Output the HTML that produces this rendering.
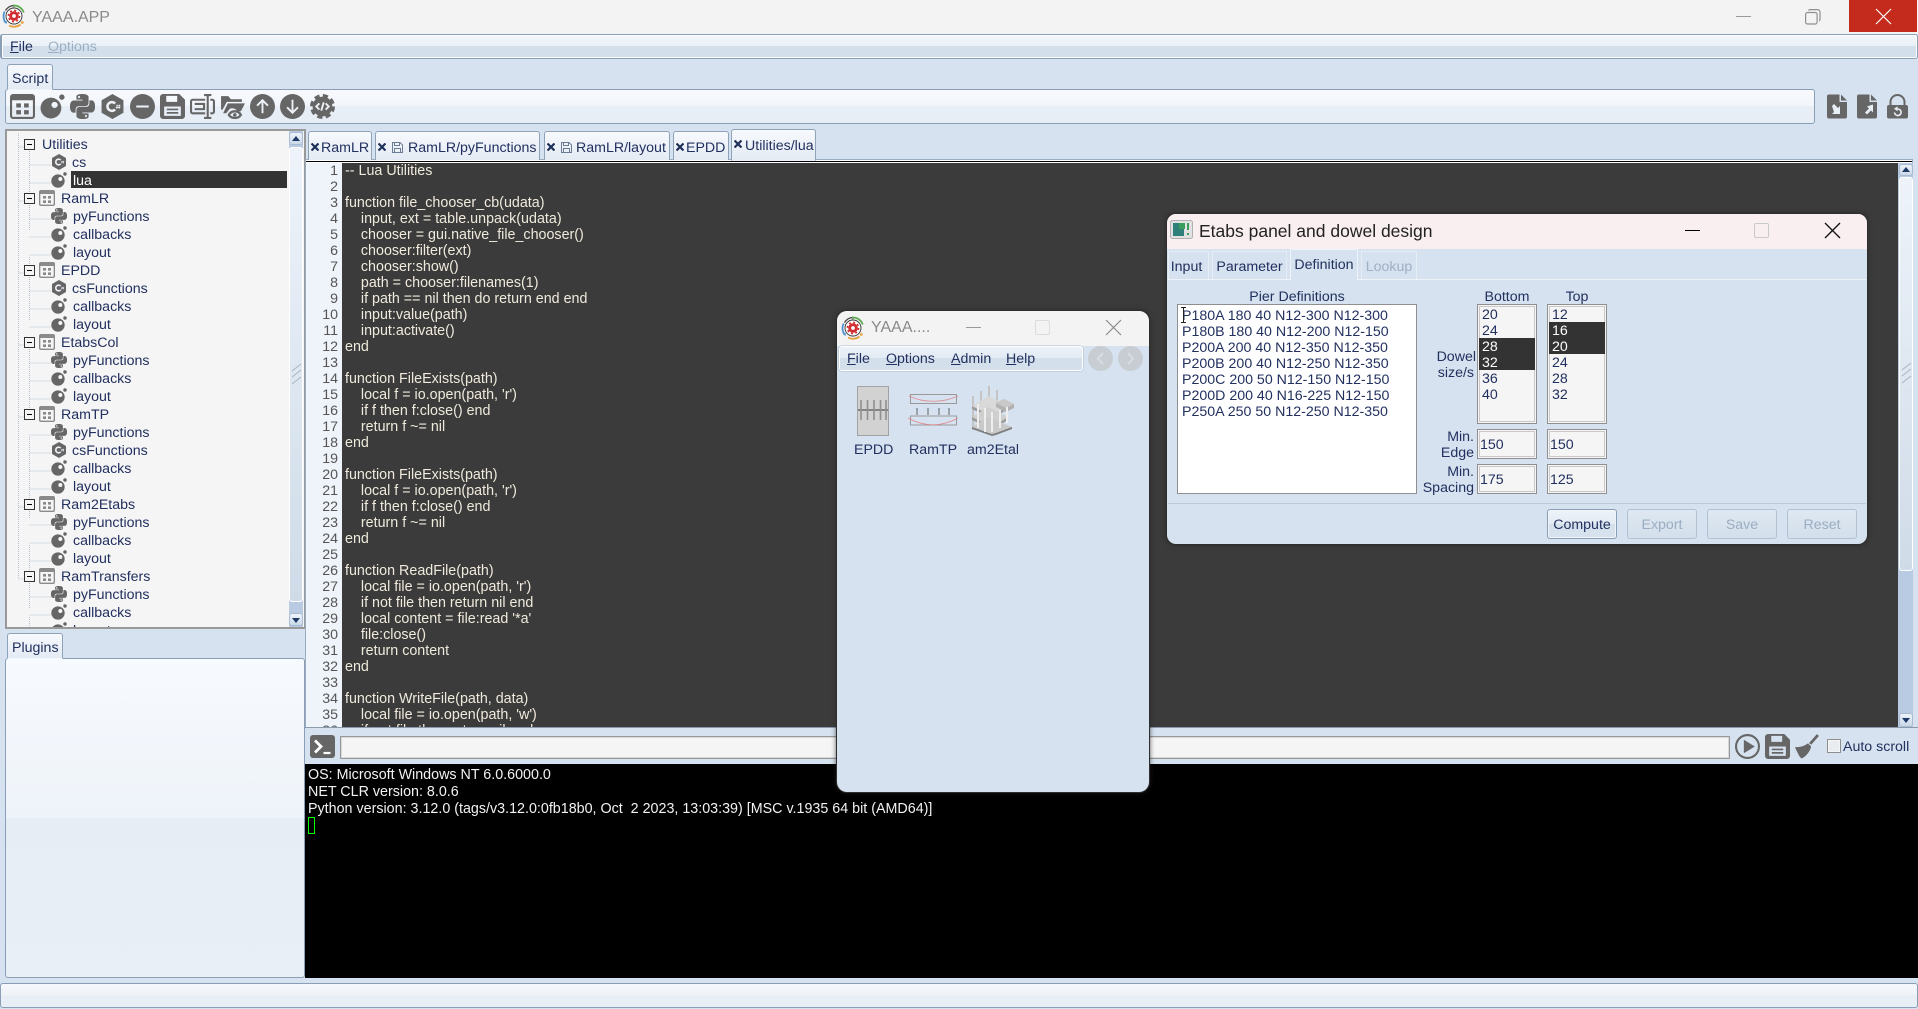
<!DOCTYPE html>
<html><head><meta charset="utf-8"><title>YAAA.APP</title>
<style>
html,body{margin:0;padding:0;width:1918px;height:1009px;overflow:hidden;background:#d6e2ef;font-family:"Liberation Sans",sans-serif;font-size:14.2px;color:#22305f}
div,pre,svg,span{box-sizing:border-box}
.t{position:absolute;white-space:pre;line-height:16px;height:16px;transform:translateY(1px)}
svg{position:absolute;display:block;overflow:visible}
u{text-decoration:underline;text-underline-offset:1px}
.tab{position:absolute;border:1px solid #8ea2b8;border-bottom:none;border-radius:3px 3px 0 0;background:linear-gradient(#f7f9fd,#e4ebf4);line-height:26px;white-space:pre}
.bar{position:absolute;border:1px solid #8a9fb5;border-radius:3px;background:linear-gradient(#f4f7fc 0,#e9f0f7 48%,#d3dfeb 48%,#d3dfeb 100%)}
.r{position:absolute;height:18px;line-height:18px;white-space:pre}
.r svg{top:1px}
.exp{position:absolute;left:17px;width:11px;height:11px;border:1px solid #333;background:#f5f5f5}
.exp:after{content:"";position:absolute;left:2px;top:4px;width:5px;height:1px;background:#000}
.sb{position:absolute;background:linear-gradient(#eef3fa,#cfdbe8)}
.sbb{position:absolute;background:linear-gradient(#eef3fa,#c9d8e8);border:1px solid #a9bbd0;border-radius:3px}
.box{position:absolute;border:2px solid #989898;background:#f5f5f5;box-shadow:inset 0 0 0 1px #d8d8d8}
.list{position:absolute;border:1px solid #8f8f8f;background:#f5f5f5;box-shadow:inset 0 0 0 1px #f5f5f5,inset 0 0 0 2px #c9c9c9}
.btn{position:absolute;top:509px;width:70px;height:30px;border:1px solid #b3c2d2;border-radius:3px;text-align:center;line-height:30px;color:#9badc2;background:linear-gradient(#dfe8f2,#d3dfeb)}
.dtab{position:absolute;border:1px solid #e6edf5;border-bottom:none;line-height:31px;text-align:center;background:#d6e2ef}
.x{left:2px;top:11px;stroke:#1e2f58;stroke-width:2.200;fill:none}
.fl{left:16px;top:10px;fill:none;stroke:#6b7c94;stroke-width:1}
.tt{position:absolute;top:1px}
</style></head>
<body>
<svg width="0" height="0" style="position:absolute">
<defs>
<symbol id="app" viewBox="0 0 24 24"><path fill-rule="evenodd" d="M3 0h18a3 3 0 0 1 3 3v18a3 3 0 0 1-3 3H3a3 3 0 0 1-3-3V3a3 3 0 0 1 3-3zM2 6v15a1 1 0 0 0 1 1h18a1 1 0 0 0 1-1V6z"/><path d="M15.500 2h2v2h-2zM19 2h2v2h-2zM6 9h4.500v4H6zM13.500 9H18v4h-4.500zM6 15.500h4.500v4H6zM13.500 15.500H18v4h-4.500z"/></symbol>
<symbol id="lua" viewBox="0 0 24 24"><path fill-rule="evenodd" d="M10.500 3.500a10 10 0 1 0 0 20 10 10 0 0 0 0-20zM14 7.500a3 3 0 1 1 0 6 3 3 0 0 1 0-6z"/><circle cx="21" cy="3" r="2.600"/></symbol>
<symbol id="py" viewBox="0 0 24 24"><path d="M14.250.18l.9.2.73.26.59.3.45.32.34.34.25.34.16.33.1.3.04.26.02.2-.01.13V8.500l-.05.63-.13.55-.21.46-.26.38-.3.31-.33.25-.35.19-.35.14-.33.1-.3.07-.26.04-.21.02H8.770l-.69.05-.59.14-.5.22-.41.27-.33.32-.27.35-.2.36-.15.37-.1.35-.07.32-.04.27-.02.21v3.060H3.170l-.21-.03-.28-.07-.32-.12-.35-.18-.36-.26-.36-.36-.35-.46-.32-.59-.28-.73-.21-.88-.14-1.050-.05-1.230.06-1.220.16-1.040.24-.87.32-.71.36-.57.4-.44.42-.33.42-.24.4-.16.36-.1.32-.05.24-.01h.16l.06.01h8.160v-.83H6.180l-.01-2.750-.02-.37.05-.34.11-.31.17-.28.25-.26.31-.23.38-.2.44-.18.51-.15.58-.12.64-.1.71-.06.77-.04.84-.02 1.270.05zm-6.300 1.980l-.23.33-.08.41.08.41.23.34.33.22.41.09.41-.09.33-.22.23-.34.08-.41-.08-.41-.23-.33-.33-.22-.41-.09-.41.09zm13.090 3.950l.28.06.32.12.35.18.36.27.36.35.35.47.32.59.28.73.21.88.14 1.040.05 1.230-.06 1.230-.16 1.040-.24.86-.32.71-.36.57-.4.45-.42.33-.42.24-.4.16-.36.09-.32.05-.24.02-.16-.01h-8.220v.82h5.840l.01 2.760.02.36-.05.34-.11.31-.17.29-.25.25-.31.24-.38.2-.44.17-.51.15-.58.13-.64.09-.71.07-.77.04-.84.01-1.270-.04-1.070-.14-.9-.2-.73-.25-.59-.3-.45-.33-.34-.34-.25-.34-.16-.33-.1-.3-.04-.25-.02-.2.01-.13v-5.340l.05-.64.13-.54.21-.46.26-.38.3-.32.33-.24.35-.2.35-.14.33-.1.3-.06.26-.04.21-.02.13-.01h5.840l.69-.05.59-.14.5-.21.41-.28.33-.32.27-.35.2-.36.15-.36.1-.35.07-.32.04-.28.02-.21V6.070h2.090l.14.010zm-6.470 14.250l-.23.33-.08.41.08.41.23.33.33.23.41.08.41-.08.33-.23.23-.33.08-.41-.08-.41-.23-.33-.33-.23-.41-.08-.41.08z"/></symbol>
<symbol id="cs" viewBox="0 0 24 24"><path d="M12 0l10.500 6v12L12 24 1.500 18V6z"/><path d="M14.500 9.200a4.200 4.200 0 1 0 0 5.600" fill="none" stroke="#eef2f8" stroke-width="2.400"/><path d="M16.500 10.200l-.4 4M18.700 10.200l-.4 4M15.500 11.400h4.300M15.200 13h4.300" stroke="#eef2f8" stroke-width=".8" fill="none"/></symbol>
<symbol id="minus" viewBox="0 0 24 24"><circle cx="12" cy="12" r="12"/><rect x="6" y="11" width="12" height="2" fill="#e8eef6"/></symbol>
<symbol id="save" viewBox="0 0 24 24"><path fill-rule="evenodd" d="M3 0h15.500L24 5.500V21a3 3 0 0 1-3 3H3a3 3 0 0 1-3-3V3a3 3 0 0 1 3-3zM6 1.800V7.500h10.500V1.800zM4 12v9h16v-9z"/><path d="M6.500 14h11v1.600h-11zM6.500 17.300h11v1.600h-11z"/></symbol>
<symbol id="rename" viewBox="0 0 24 24"><path d="M14.500 5.500H2.500a1.500 1.500 0 0 0-1.500 1.500v10a1.500 1.500 0 0 0 1.500 1.500h12M19.500 5.500h2a1.500 1.500 0 0 1 1.500 1.500v10a1.500 1.500 0 0 1-1.500 1.500h-2M17 1v22M13.500 1h7M13.500 23h7M4.500 9.500h9v5h-9" fill="none" stroke="currentColor" stroke-width="2"/></symbol>
<symbol id="folder" viewBox="0 0 24 24"><path d="M1 2h7l2.500 3H21v2.500H6.500L2.500 15H1zM7.500 9H24l-4 7.500h-3a7 7 0 0 0-7.500-2.500L6 18.500H3z"/><path d="M8.500 20c2.500-4.500 9-4.500 11.500 0-2.500 4-9 4-11.500 0z" fill="none" stroke="currentColor" stroke-width="2.200"/><circle cx="14.200" cy="20" r="1.700"/></symbol>
<symbol id="up" viewBox="0 0 24 24"><circle cx="12" cy="12" r="12"/><path d="M12 18.500V6M6.800 11.200L12 6l5.200 5.200" fill="none" stroke="#eef2f8" stroke-width="1.800"/></symbol>
<symbol id="down" viewBox="0 0 24 24"><circle cx="12" cy="12" r="12"/><path d="M12 5.500V18M6.800 12.800L12 18l5.200-5.200" fill="none" stroke="#eef2f8" stroke-width="1.800"/></symbol>
<symbol id="gear" viewBox="0 0 24 24"><circle cx="12" cy="12" r="9.500"/><circle cx="12" cy="12" r="10.500" fill="none" stroke="currentColor" stroke-width="3" stroke-dasharray="5 3.250"/><path d="M9 9l-3 3 3 3M15 9l3 3-3 3M13.200 8l-2.400 8" fill="none" stroke="#eef2f8" stroke-width="1.800"/></symbol>
<symbol id="fin" viewBox="0 0 20 24"><path d="M2 0h10.500v7.500H20V22a2 2 0 0 1-2 2H2a2 2 0 0 1-2-2V2a2 2 0 0 1 2-2zM14 0l6 6h-6z"/><path d="M5 11.500l2-2 4 4 2-2v8H5l2-2z" fill="#e8eef6"/></symbol>
<symbol id="fout" viewBox="0 0 20 24"><path d="M2 0h10.500v7.500H20V22a2 2 0 0 1-2 2H2a2 2 0 0 1-2-2V2a2 2 0 0 1 2-2zM14 0l6 6h-6z"/><path d="M16 10v8l-2-2-4 4-2-2 4-4-2-2z" fill="#e8eef6"/></symbol>
<symbol id="lock" viewBox="0 0 21 24"><path d="M3.500 11V7.500a7 7 0 0 1 14 0V11" fill="none" stroke="currentColor" stroke-width="2"/><path d="M2 10.500h17a2 2 0 0 1 2 2v9.500a2 2 0 0 1-2 2H2a2 2 0 0 1-2-2v-9.500a2 2 0 0 1 2-2z"/><path d="M8.500 14.500h2.500a3.300 3.300 0 1 1-3.500 3.500" fill="none" stroke="#e8eef6" stroke-width="1.600"/><path d="M10.500 11.800v5l-3.500-2.500z" fill="#e8eef6"/></symbol>
<symbol id="term" viewBox="0 0 25 23"><path d="M3 0h19a3 3 0 0 1 3 3v17a3 3 0 0 1-3 3H3a3 3 0 0 1-3-3V3a3 3 0 0 1 3-3z"/><path d="M5 5.500l6 6-6 6" fill="none" stroke="#fff" stroke-width="2.800"/><path d="M13.500 18h7" stroke="#fff" stroke-width="2.200"/></symbol>
<symbol id="play" viewBox="0 0 24 24"><circle cx="12" cy="12" r="11" fill="none" stroke="currentColor" stroke-width="2"/><path d="M8.500 5.500l10.500 6.500-10.500 6.500z"/></symbol>
<symbol id="brush" viewBox="0 0 24 24"><path d="M14.500 9.500L22 1" stroke="currentColor" stroke-width="2.600" fill="none"/><path d="M0 12.500c4 .5 8-.5 12.500-3.500l3 3c-1 5-5 9.500-9 11.500-1.500-1-2.500-2-3.500-4.500C2 17 1 15 0 12.500z"/></symbol>
<symbol id="logo" viewBox="0 0 24 24"><path d="M3.500 6.500A10.500 10.500 0 0 1 11.500 1.500" fill="none" stroke="#444" stroke-width="1.300"/><path d="M12.500 1.500A10.500 10.500 0 0 1 21.800 8.500" fill="none" stroke="#5aa84f" stroke-width="1.700"/><path d="M11 .3l3.200 1.500-3 1.800z" fill="#5aa84f"/><path d="M2.700 7.500A10.500 10.500 0 0 0 3.500 18.500" fill="none" stroke="#4a90d0" stroke-width="1.700"/><path d="M1.500 17l3.500.3-.6 3z" fill="#4a90d0"/><path d="M7 21.500A10.500 10.500 0 0 0 18.500 20.500" fill="none" stroke="#e8a23c" stroke-width="1.800"/><circle cx="20.300" cy="18.500" r="1.400" fill="#e8a23c"/><circle cx="12" cy="12" r="8" fill="#fff" stroke="#333" stroke-width=".9"/><circle cx="12" cy="12" r="4.800" fill="#d22c30"/><circle cx="12" cy="12" r="5.600" fill="none" stroke="#d22c30" stroke-width="1.600" stroke-dasharray="2 2.400"/><circle cx="12" cy="12" r="1.900" fill="#fff"/></symbol>
<symbol id="xm" viewBox="0 0 8 8"><path d="M.5.5l7 7M7.500.5l-7 7"/></symbol>
</defs>
</svg>

<!-- main title -->
<div style="position:absolute;left:0;top:0;width:1918px;height:34px;background:#f3f3f3"></div>
<svg style="left:2px;top:4px" width="24" height="24"><use href="#logo"/></svg>
<div class="t" style="left:32px;top:7px;font-size:16px;line-height:20px;height:20px;color:#8a8a8a">YAAA.APP</div>
<div style="position:absolute;left:1736px;top:16px;width:15px;height:1px;background:#999"></div>
<svg style="left:1805px;top:9px" width="16" height="16" fill="none" stroke="#8f8f8f" stroke-width="1.200"><rect x=".6" y="3.500" width="11.500" height="11.500" rx="2"/><path d="M3.500 1.500A1.500 1.500 0 0 1 5 .6h7.500A2.500 2.500 0 0 1 15 3v7.500a1.500 1.500 0 0 1-1 1.400"/></svg>
<div style="position:absolute;left:1849px;top:0;width:68px;height:32px;background:#c42b1c"></div>
<svg style="left:1876px;top:9px" width="15" height="15" stroke="#fff" stroke-width="1.200"><path d="M0 0l15 15M15 0L0 15"/></svg>

<!-- menu -->
<div class="bar" style="left:0;top:34px;width:1918px;height:25px;border-left:2px solid #8a9fb5;box-shadow:inset 0 0 0 1px #fff"></div>
<div class="t" style="left:10px;top:38px"><u>F</u>ile</div>
<div class="t" style="left:48px;top:38px;color:#9dafc4"><u>O</u>ptions</div>

<!-- script tab + toolbar -->
<div class="tab" style="left:7px;top:64px;width:46px;height:26px;padding-left:4px;line-height:29px;z-index:2;border-bottom:1px solid #eef3f9">Script</div>
<div class="bar" style="left:5px;top:89px;width:1810px;height:35px;background:linear-gradient(#f7f9fd 0,#f2f6fb 48%,#e7eef6 48%,#e7eef6 100%)"></div>
<div style="color:#666;fill:#666">
<svg style="left:10px;top:94px" width="25" height="25"><use href="#app"/></svg>
<svg style="left:40px;top:94px" width="25" height="25"><use href="#lua"/></svg>
<svg style="left:70px;top:94px" width="25" height="25"><use href="#py"/></svg>
<svg style="left:100px;top:94px" width="25" height="25"><use href="#cs"/></svg>
<svg style="left:130px;top:94px" width="25" height="25"><use href="#minus"/></svg>
<svg style="left:160px;top:94px" width="25" height="25"><use href="#save"/></svg>
<svg style="left:190px;top:94px" width="25" height="25"><use href="#rename"/></svg>
<svg style="left:220px;top:94px" width="25" height="25"><use href="#folder"/></svg>
<svg style="left:250px;top:94px" width="25" height="25"><use href="#up"/></svg>
<svg style="left:280px;top:94px" width="25" height="25"><use href="#down"/></svg>
<svg style="left:310px;top:94px" width="25" height="25"><use href="#gear"/></svg>
<svg style="left:1827px;top:94px" width="20" height="25"><use href="#fin"/></svg>
<svg style="left:1857px;top:94px" width="20" height="25"><use href="#fout"/></svg>
<svg style="left:1887px;top:94px" width="21" height="25"><use href="#lock"/></svg>
</div>

<!-- tree -->
<div style="position:absolute;left:5px;top:129px;width:301px;height:500px;border:2px solid #999;background:#f5f5f5"></div>
<div style="position:absolute;left:7px;top:132px;width:282px;height:495px;overflow:hidden;fill:#666">
<svg style="left:0;top:-1px" width="100" height="520" fill="none" stroke="#b6c0d2" stroke-dasharray="1 1"><path d="M11.500 0V448M22.500 18V100M22.500 126V190M22.500 216V280M22.500 306V388M22.500 414V478M22.500 486V520M11.500 16H17M11.500 70H17M11.500 142H17M11.500 214H17M11.500 286H17M11.500 376H17M11.500 448H17M22.500 34H44M22.500 52H44M22.500 88H44M22.500 106H44M22.500 124H44M22.500 160H44M22.500 178H44M22.500 196H44M22.500 232H44M22.500 250H44M22.500 268H44M22.500 304H44M22.500 322H44M22.500 340H44M22.500 358H44M22.500 394H44M22.500 412H44M22.500 430H44M22.500 466H44M22.500 484H44"/></svg>
<div style="position:absolute;left:64px;top:39px;width:216px;height:17px;background:#333"></div>
<div class="exp" style="top:7px"></div><div class="r" style="left:35px;top:4px">Utilities</div>
<div class="r" style="left:44px;top:21px"><svg style="left:0" width="16" height="16"><use href="#cs"/></svg><span class="tt" style="left:21px">cs</span></div>
<div class="r" style="left:44px;top:39px"><svg style="left:0" width="16" height="16"><use href="#lua"/></svg><span class="tt" style="left:22px;color:#fff">lua</span></div>
<div class="exp" style="top:61px"></div><div class="r" style="left:32px;top:57px"><svg style="left:0;fill:#8a8a8a" width="16" height="16"><use href="#app"/></svg><span class="tt" style="left:22px">RamLR</span></div>
<div class="r" style="left:44px;top:75px"><svg style="left:0" width="16" height="16"><use href="#py"/></svg><span class="tt" style="left:22px">pyFunctions</span></div>
<div class="r" style="left:44px;top:93px"><svg style="left:0" width="16" height="16"><use href="#lua"/></svg><span class="tt" style="left:22px">callbacks</span></div>
<div class="r" style="left:44px;top:111px"><svg style="left:0" width="16" height="16"><use href="#lua"/></svg><span class="tt" style="left:22px">layout</span></div>
<div class="exp" style="top:133px"></div><div class="r" style="left:32px;top:129px"><svg style="left:0;fill:#8a8a8a" width="16" height="16"><use href="#app"/></svg><span class="tt" style="left:22px">EPDD</span></div>
<div class="r" style="left:44px;top:147px"><svg style="left:0" width="16" height="16"><use href="#cs"/></svg><span class="tt" style="left:21px">csFunctions</span></div>
<div class="r" style="left:44px;top:165px"><svg style="left:0" width="16" height="16"><use href="#lua"/></svg><span class="tt" style="left:22px">callbacks</span></div>
<div class="r" style="left:44px;top:183px"><svg style="left:0" width="16" height="16"><use href="#lua"/></svg><span class="tt" style="left:22px">layout</span></div>
<div class="exp" style="top:205px"></div><div class="r" style="left:32px;top:201px"><svg style="left:0;fill:#8a8a8a" width="16" height="16"><use href="#app"/></svg><span class="tt" style="left:22px">EtabsCol</span></div>
<div class="r" style="left:44px;top:219px"><svg style="left:0" width="16" height="16"><use href="#py"/></svg><span class="tt" style="left:22px">pyFunctions</span></div>
<div class="r" style="left:44px;top:237px"><svg style="left:0" width="16" height="16"><use href="#lua"/></svg><span class="tt" style="left:22px">callbacks</span></div>
<div class="r" style="left:44px;top:255px"><svg style="left:0" width="16" height="16"><use href="#lua"/></svg><span class="tt" style="left:22px">layout</span></div>
<div class="exp" style="top:277px"></div><div class="r" style="left:32px;top:273px"><svg style="left:0;fill:#8a8a8a" width="16" height="16"><use href="#app"/></svg><span class="tt" style="left:22px">RamTP</span></div>
<div class="r" style="left:44px;top:291px"><svg style="left:0" width="16" height="16"><use href="#py"/></svg><span class="tt" style="left:22px">pyFunctions</span></div>
<div class="r" style="left:44px;top:309px"><svg style="left:0" width="16" height="16"><use href="#cs"/></svg><span class="tt" style="left:21px">csFunctions</span></div>
<div class="r" style="left:44px;top:327px"><svg style="left:0" width="16" height="16"><use href="#lua"/></svg><span class="tt" style="left:22px">callbacks</span></div>
<div class="r" style="left:44px;top:345px"><svg style="left:0" width="16" height="16"><use href="#lua"/></svg><span class="tt" style="left:22px">layout</span></div>
<div class="exp" style="top:367px"></div><div class="r" style="left:32px;top:363px"><svg style="left:0;fill:#8a8a8a" width="16" height="16"><use href="#app"/></svg><span class="tt" style="left:22px">Ram2Etabs</span></div>
<div class="r" style="left:44px;top:381px"><svg style="left:0" width="16" height="16"><use href="#py"/></svg><span class="tt" style="left:22px">pyFunctions</span></div>
<div class="r" style="left:44px;top:399px"><svg style="left:0" width="16" height="16"><use href="#lua"/></svg><span class="tt" style="left:22px">callbacks</span></div>
<div class="r" style="left:44px;top:417px"><svg style="left:0" width="16" height="16"><use href="#lua"/></svg><span class="tt" style="left:22px">layout</span></div>
<div class="exp" style="top:439px"></div><div class="r" style="left:32px;top:435px"><svg style="left:0;fill:#8a8a8a" width="16" height="16"><use href="#app"/></svg><span class="tt" style="left:22px">RamTransfers</span></div>
<div class="r" style="left:44px;top:453px"><svg style="left:0" width="16" height="16"><use href="#py"/></svg><span class="tt" style="left:22px">pyFunctions</span></div>
<div class="r" style="left:44px;top:471px"><svg style="left:0" width="16" height="16"><use href="#lua"/></svg><span class="tt" style="left:22px">callbacks</span></div>
<div class="r" style="left:44px;top:489px"><svg style="left:0" width="16" height="16"><use href="#lua"/></svg><span class="tt" style="left:22px">layout</span></div>
</div>
<div class="sb" style="left:289px;top:131px;width:14px;height:496px;background:#b9cbe3"></div>
<div class="sb" style="left:289px;top:147px;width:14px;height:455px;border:1px solid #fff;border-radius:3px"></div>
<div class="sbb" style="left:289px;top:132px;width:14px;height:13px"></div>
<svg style="left:292px;top:136px" width="8" height="5" fill="#1f3a66"><path d="M0 5l4-5 4 5z"/></svg>
<div class="sbb" style="left:289px;top:613px;width:14px;height:13px"></div>
<svg style="left:292px;top:618px" width="8" height="5" fill="#1f3a66"><path d="M0 0l4 5 4-5z"/></svg>
<svg style="left:292px;top:364px" width="9" height="20" stroke="#a9b5c4" stroke-width="1"><path d="M0 7L9 0M0 13L9 6M0 20L9 13"/></svg>

<!-- plugins -->
<div class="tab" style="left:7px;top:633px;width:56px;height:26px;padding-left:4px;line-height:29px;z-index:2;border-bottom:1px solid #f5f8fd">Plugins</div>
<div class="bar" style="left:5px;top:658px;width:300px;height:320px;background:linear-gradient(#f7fafe 0,#eef3f9 50%,#e6edf5 50%,#e9eff7 100%)"></div>

<!-- editor tabs -->
<div style="position:absolute;left:305px;top:159px;width:1608px;height:569px;border:1px solid #9aacc0;background:#eff4fa"></div>
<div class="tab" style="left:308px;top:131px;width:64px;height:29px;line-height:30px"><svg class="x" width="8" height="8"><use href="#xm"/></svg><span class="tt" style="left:12px">RamLR</span></div>
<div class="tab" style="left:375px;top:131px;width:165px;height:29px;line-height:30px"><svg class="x" width="8" height="8"><use href="#xm"/></svg><svg class="fl" width="11" height="11"><path d="M.5.500h7.500l2.500 2.500v7.500H.5zM2.500.5v3h5v-3M2.500 10.500v-4h6v4"/></svg><span class="tt" style="left:32px">RamLR/pyFunctions</span></div>
<div class="tab" style="left:544px;top:131px;width:126px;height:29px;line-height:30px"><svg class="x" width="8" height="8"><use href="#xm"/></svg><svg class="fl" width="11" height="11"><path d="M.5.500h7.500l2.500 2.500v7.500H.5zM2.500.5v3h5v-3M2.500 10.500v-4h6v4"/></svg><span class="tt" style="left:31px">RamLR/layout</span></div>
<div class="tab" style="left:673px;top:131px;width:56px;height:29px;line-height:30px"><svg class="x" width="8" height="8"><use href="#xm"/></svg><span class="tt" style="left:12px">EPDD</span></div>
<div class="tab" style="left:731px;top:129px;width:85px;height:32px;line-height:30px;z-index:2;border-bottom:1px solid #eef3f9"><svg class="x" style="top:10px" width="8" height="8"><use href="#xm"/></svg><span class="tt" style="left:13px">Utilities/lua</span></div>

<!-- editor -->
<div style="position:absolute;left:306px;top:161px;width:1606px;height:1px;background:#000"></div>
<div style="position:absolute;left:306px;top:160px;width:1606px;height:1px;background:#fff"></div>
<div style="position:absolute;left:306px;top:162px;width:1606px;height:1px;background:#fff"></div>
<div style="position:absolute;left:342px;top:163px;width:1556px;height:564px;background:#3b3b3b"></div>
<pre style="position:absolute;left:306px;top:163px;width:32px;height:564px;margin:0;overflow:hidden;text-align:right;font:14.200px/16px 'Liberation Sans',sans-serif;color:#555">1
2
3
4
5
6
7
8
9
10
11
12
13
14
15
16
17
18
19
20
21
22
23
24
25
26
27
28
29
30
31
32
33
34
35
36</pre>
<pre style="position:absolute;left:345px;top:163px;width:800px;height:564px;margin:0;overflow:hidden;font:14.300px/16px 'Liberation Sans',sans-serif;color:#f0eadc">-- Lua Utilities

function file_chooser_cb(udata)
    input, ext = table.unpack(udata)
    chooser = gui.native_file_chooser()
    chooser:filter(ext)
    chooser:show()
    path = chooser:filenames(1)
    if path == nil then do return end end
    input:value(path)
    input:activate()
end

function FileExists(path)
    local f = io.open(path, 'r')
    if f then f:close() end
    return f ~= nil
end

function FileExists(path)
    local f = io.open(path, 'r')
    if f then f:close() end
    return f ~= nil
end

function ReadFile(path)
    local file = io.open(path, 'r')
    if not file then return nil end
    local content = file:read '*a'
    file:close()
    return content
end

function WriteFile(path, data)
    local file = io.open(path, 'w')
    if not file then return nil end</pre>
<div class="sb" style="left:1898px;top:163px;width:15px;height:564px;background:#b9cbe3"></div>
<div class="sb" style="left:1899px;top:177px;width:14px;height:394px;border:1px solid #fff;border-radius:3px"></div>
<div class="sbb" style="left:1899px;top:164px;width:14px;height:12px"></div>
<svg style="left:1902px;top:167px" width="8" height="5" fill="#1f3a66"><path d="M0 5l4-5 4 5z"/></svg>
<div class="sbb" style="left:1899px;top:713px;width:14px;height:14px"></div>
<svg style="left:1902px;top:718px" width="8" height="5" fill="#1f3a66"><path d="M0 0l4 5 4-5z"/></svg>
<svg style="left:1902px;top:363px" width="9" height="20" stroke="#a9b5c4" stroke-width="1"><path d="M0 7L9 0M0 13L9 6M0 20L9 13"/></svg>
<div style="position:absolute;left:305px;top:727px;width:1613px;height:1px;background:#8a9aac"></div>

<!-- command bar -->
<svg style="left:310px;top:735px;fill:#666" width="25" height="23"><use href="#term"/></svg>
<div class="box" style="left:340px;top:736px;width:1390px;height:23px;border-width:1px"></div>
<div style="color:#666;fill:#666">
<svg style="left:1735px;top:734px" width="25" height="25"><use href="#play"/></svg>
<svg style="left:1765px;top:734px" width="25" height="25"><use href="#save"/></svg>
<svg style="left:1795px;top:734px" width="25" height="25"><use href="#brush"/></svg>
</div>
<div style="position:absolute;left:1827px;top:739px;width:14px;height:14px;border:1px solid #8f8f8f;background:#e9edf2;box-shadow:inset 0 0 0 1px #f5f5f5"></div>
<div class="t" style="left:1843px;top:738px;color:#22305f">Auto scroll</div>

<!-- terminal -->
<div style="position:absolute;left:305px;top:764px;width:1613px;height:214px;background:#000"></div>
<pre style="position:absolute;left:308px;top:767px;margin:0;font:14.300px/17px 'Liberation Sans',sans-serif;color:#f2f2f2">OS: Microsoft Windows NT 6.0.6000.0
NET CLR version: 8.0.6
Python version: 3.12.0 (tags/v3.12.0:0fb18b0, Oct  2 2023, 13:03:39) [MSC v.1935 64 bit (AMD64)]</pre>
<div style="position:absolute;left:308px;top:817px;width:7px;height:17px;border:1px solid #0f0"></div>

<!-- status -->
<div class="bar" style="left:0;top:983px;width:1918px;height:25px;background:linear-gradient(#f5f8fc 0,#eef3f8 50%,#e7edf5 50%,#e9eff6 100%)"></div>

<!-- YAAA window -->
<div style="position:absolute;left:837px;top:311px;width:312px;height:481px;border-radius:10px;background:#d6e2ef;box-shadow:0 0 0 1px #2e2e2e,0 0 6px #222;overflow:hidden">
<div style="position:absolute;left:0;top:0;width:312px;height:35px;background:#f3f3f3"></div>
</div>
<svg style="left:841px;top:316px" width="24" height="24"><use href="#logo"/></svg>
<div class="t" style="left:871px;top:317px;font-size:16px;line-height:20px;height:20px;color:#8a8a8a">YAAA....</div>
<div style="position:absolute;left:966px;top:327px;width:15px;height:1px;background:#999"></div>
<div style="position:absolute;left:1035px;top:320px;width:15px;height:15px;border:1px solid #dcdcdc;border-radius:2px"></div>
<svg style="left:1106px;top:320px" width="15" height="15" stroke="#8a8a8a" stroke-width="1.200"><path d="M0 0l15 15M15 0L0 15"/></svg>
<div class="bar" style="left:839px;top:346px;width:244px;height:25px;border-color:#fff;background:linear-gradient(#edf2f8 0,#e2eaf3 48%,#d3dfeb 48%,#d3dfeb 100%);box-shadow:0 0 0 .5px #a9bace"></div>
<div class="t" style="left:847px;top:350px"><u>F</u>ile</div>
<div class="t" style="left:886px;top:350px"><u>O</u>ptions</div>
<div class="t" style="left:951px;top:350px"><u>A</u>dmin</div>
<div class="t" style="left:1006px;top:350px"><u>H</u>elp</div>
<svg style="left:1088px;top:346px" width="50" height="25"><circle cx="12.500" cy="12.500" r="12.500" fill="#c8cdd3"/><circle cx="42.500" cy="12.500" r="12.500" fill="#c8cdd3"/><path d="M15 7l-5 5.500 5 5.500M40 7l5 5.500-5 5.500" fill="none" stroke="#d8dde3" stroke-width="2"/></svg>
<!-- EPDD icon -->
<svg style="left:857px;top:386px" width="32" height="50"><rect x=".5" y=".5" width="31" height="49" fill="#d2d2d2" stroke="#a2a2a2"/><path d="M1 24h30" stroke="#555" stroke-width="1.200"/><path d="M4 14v20M10.500 14v20M17 14v20M23.500 14v20M29 14v20" stroke="#8f8f8f" stroke-width="1.600"/></svg>
<!-- RamTP icon -->
<svg style="left:908px;top:394px" width="50" height="34" fill="none"><rect x="2.500" y=".5" width="46" height="9" stroke="#999"/><rect x="2.500" y="22" width="46" height="9" stroke="#999"/><path d="M1 2c14 7 34 7 49 0M0 24c16 9 34 9 50 0" stroke="#e08a92" stroke-width=".8"/><path d="M9 14v7M20 14v7M31 14v7M41 14v7" stroke="#444" stroke-width=".8"/></svg>
<!-- building icon -->
<svg style="left:972px;top:386px" width="44" height="50">
<path d="M1 10v34M9 5v34M17 0v26M25 4v20" stroke="#c4c4c4" stroke-width="2"/>
<path d="M0 20L16 10l20 10-16 10z" fill="#d9d9d9"/><path d="M0 20v3l20 10v-3zM36 20v3L20 33v-3z" fill="#9c9c9c"/>
<path d="M0 31L16 21l20 10-16 10z" fill="#cfcfcf"/><path d="M0 31v3l20 10v-3zM36 31v3L20 44v-3z" fill="#9c9c9c"/>
<path d="M0 41L16 31l24 10-16 8z" fill="#c9c9c9"/><path d="M0 41v2l20 7 4-1 16-6v-2L24 47l-4 1z" fill="#7f7f7f"/>
<path d="M24 17l8-4 10 5v4l-8 4-10-5z" fill="#b2b2b2"/><path d="M24 17l10 5 8-4-10-5z" fill="#c9c9c9"/>
<path d="M6 18v24M13 22v24M20 26v20M28 24v18M35 21v16" stroke="#eee" stroke-width="2"/>
</svg>
<div class="t" style="left:854px;top:441px;width:38px;text-align:center">EPDD</div>
<div class="t" style="left:908px;top:441px;width:50px;text-align:center">RamTP</div>
<div class="t" style="left:967px;top:441px;width:51px;overflow:hidden">am2Etabs</div>

<!-- Etabs window -->
<div style="position:absolute;left:1167px;top:214px;width:700px;height:330px;border-radius:9px;background:#d6e2ef;box-shadow:0 0 0 1px #2e2e2e,0 0 6px #222;overflow:hidden">
<div style="position:absolute;left:0;top:0;width:700px;height:35px;background:#f9eff0"></div>
</div>
<svg style="left:1170px;top:220px" width="23" height="19"><rect x=".5" y=".5" width="22" height="18" rx="2" fill="#e2e2e2" stroke="#b0b0b0"/><rect x="3" y="3" width="11" height="13" fill="#2f7f7a"/><rect x="9" y="3" width="6" height="6" fill="#3a9f5c"/><rect x="17" y="3" width="2" height="7" fill="#3a9f5c"/><rect x="17" y="13" width="2" height="2" fill="#3a9f5c"/></svg>
<div class="t" style="left:1199px;top:220px;font-size:17.500px;line-height:20px;height:20px;color:#222">Etabs panel and dowel design</div>
<div style="position:absolute;left:1685px;top:230px;width:15px;height:1px;background:#000"></div>
<div style="position:absolute;left:1754px;top:223px;width:15px;height:15px;border:1px solid #c9c9c9;border-radius:2px"></div>
<svg style="left:1825px;top:223px" width="15" height="15" stroke="#111" stroke-width="1.300"><path d="M0 0l15 15M15 0L0 15"/></svg>
<div style="position:absolute;left:1168px;top:279px;width:698px;height:1px;background:#eef3f9"></div>
<div class="dtab" style="left:1168px;top:251px;width:41px;height:28px;padding-right:4px">Input</div>
<div class="dtab" style="left:1212px;top:251px;width:75px;height:28px">Parameter</div>
<div class="dtab" style="left:1290px;top:249px;width:68px;height:31px;border-color:#eef3f9">Definition</div>
<div class="dtab" style="left:1361px;top:251px;width:56px;height:28px;color:#9dafc4">Lookup</div>
<div class="t" style="left:1177px;top:288px;width:240px;text-align:center">Pier Definitions</div>
<div class="t" style="left:1477px;top:288px;width:60px;text-align:center">Bottom</div>
<div class="t" style="left:1547px;top:288px;width:60px;text-align:center">Top</div>
<div style="position:absolute;left:1177px;top:304px;width:240px;height:190px;border:1px solid #8f8f8f;background:#fff"></div>
<pre style="position:absolute;left:1182px;top:308px;margin:0;font:14.200px/16px 'Liberation Sans',sans-serif;color:#22305f">P180A 180 40 N12-300 N12-300
P180B 180 40 N12-200 N12-150
P200A 200 40 N12-350 N12-350
P200B 200 40 N12-250 N12-350
P200C 200 50 N12-150 N12-150
P200D 200 40 N16-225 N12-150
P250A 250 50 N12-250 N12-350</pre>
<svg style="left:1181px;top:307px" width="5" height="16" stroke="#222" fill="none"><path d="M2.500 0v16M0 .5h5M0 15.500h5"/></svg>
<div class="list" style="left:1477px;top:304px;width:60px;height:120px"></div>
<div style="position:absolute;left:1479px;top:338px;width:56px;height:32px;background:#333"></div>
<pre style="position:absolute;left:1482px;top:307px;margin:0;font:14.200px/16px 'Liberation Sans',sans-serif;color:#22305f">20
24
<span style="color:#fff">28
32</span>
36
40</pre>
<div class="list" style="left:1547px;top:304px;width:60px;height:120px"></div>
<div style="position:absolute;left:1549px;top:322px;width:56px;height:32px;background:#333"></div>
<pre style="position:absolute;left:1552px;top:307px;margin:0;font:14.200px/16px 'Liberation Sans',sans-serif;color:#22305f">12
<span style="color:#fff">16
20</span>
24
28
32</pre>
<div class="t" style="left:1420px;top:348px;width:56px;text-align:right">Dowel</div>
<div class="t" style="left:1420px;top:364px;width:54px;text-align:right">size/s</div>
<div class="t" style="left:1420px;top:428px;width:54px;text-align:right">Min.</div>
<div class="t" style="left:1420px;top:444px;width:54px;text-align:right">Edge</div>
<div class="t" style="left:1420px;top:463px;width:54px;text-align:right">Min.</div>
<div class="t" style="left:1420px;top:479px;width:54px;text-align:right">Spacing</div>
<div class="list" style="left:1477px;top:429px;width:60px;height:30px"></div>
<div class="list" style="left:1547px;top:429px;width:60px;height:30px"></div>
<div class="list" style="left:1477px;top:464px;width:60px;height:30px"></div>
<div class="list" style="left:1547px;top:464px;width:60px;height:30px"></div>
<div class="t" style="left:1480px;top:436px">150</div>
<div class="t" style="left:1550px;top:436px">150</div>
<div class="t" style="left:1480px;top:471px">175</div>
<div class="t" style="left:1550px;top:471px">125</div>
<div style="position:absolute;left:1168px;top:503px;width:698px;height:1px;background:#bcc9d6"></div>
<div class="btn" style="left:1547px;color:#22305f;border-color:#8a9fb5;box-shadow:inset 0 0 0 1px #f0f4f9;background:linear-gradient(#eef3f9 0,#e4ebf4 50%,#d3dfeb 50%,#d8e3ee 100%)">Compute</div>
<div class="btn" style="left:1627px">Export</div>
<div class="btn" style="left:1707px">Save</div>
<div class="btn" style="left:1787px">Reset</div>
</body></html>
